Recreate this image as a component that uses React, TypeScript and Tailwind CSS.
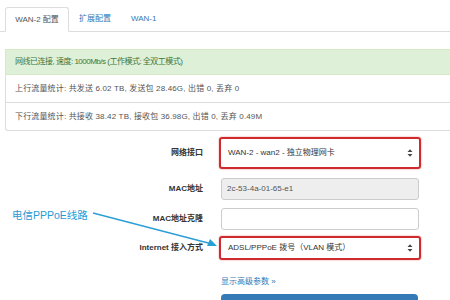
import React from "react";

const Arrows = () => (
  <svg width="6" height="9" viewBox="0 0 6 9" className="absolute right-[6px] top-1/2 -translate-y-1/2">
    <path d="M0.5 3.5 L3 0.8 L5.5 3.5 Z" fill="#444" />
    <path d="M0.5 5.5 L3 8.2 L5.5 5.5 Z" fill="#444" />
  </svg>
);

export default function App() {
  return (
    <div
      className="relative w-[450px] h-[300px] overflow-hidden bg-white text-[#333]"
      style={{ fontFamily: '"Liberation Sans", "Noto Sans CJK SC", sans-serif' }}
    >
      {/* Tabs */}
      <div className="flex pt-[7px] pl-[5px] border-b border-[#ddd] text-[8px]">
        <div className="-mb-px h-[25px] w-[64px] flex items-center justify-center border border-[#ddd] border-b-white rounded-t-[3px] bg-white text-[#555]">
          WAN-2 配置
        </div>
        <div className="h-[24px] flex items-center pl-[10px] pr-[20px] text-[#337ab7]">扩展配置</div>
        <div className="h-[24px] flex items-center text-[#337ab7]">WAN-1</div>
      </div>

      {/* Alert */}
      <div className="mt-[17px] ml-[5px] h-[26px] flex items-center pl-[9px] bg-[#dff0d8] border border-[#d6e9c6] border-r-0 text-[#3c763d] text-[8px] tracking-[-0.5px]">
        网线已连接, 速度: 1000Mb/s (工作模式: 全双工模式)
      </div>

      {/* List */}
      <div className="ml-[5px] border border-t-0 border-r-0 border-[#ddd] rounded-bl-[3px] text-[8px] text-[#555] tracking-[0.15px]">
        <div className="h-[28px] flex items-center pl-[9px] border-b border-[#ddd]">
          上行流量统计: 共发送 6.02 TB, 发送包 28.46G, 出错 0, 丢弃 0
        </div>
        <div className="h-[27px] flex items-center pl-[9px]">
          下行流量统计: 共接收 38.42 TB, 接收包 36.98G, 出错 0, 丢弃 0.49M
        </div>
      </div>

      {/* Form */}
      <div className="mt-[6px] text-[8px]">
        <div className="flex items-center h-[32px]">
          <div className="w-[203px] text-right font-bold">网络接口</div>
          <div className="relative ml-[16px] w-[202px] h-[32px] flex items-center pl-[7px] border-2 border-[#cf2b2f] rounded-[3px] shadow-[0_0_2px_#e88]">
            WAN-2 - wan2 - 独立物理网卡
            <Arrows />
          </div>
        </div>

        <div className="flex items-center h-[22px] mt-[9px]">
          <div className="w-[203px] text-right font-bold">MAC地址</div>
          <div className="ml-[18px] w-[198px] h-[22px] flex items-center pl-[5px] bg-[#eee] border border-[#ccc] rounded-[3px] text-[#555]">
            2c-53-4a-01-65-e1
          </div>
        </div>

        <div className="flex items-center h-[22px] mt-[8px]">
          <div className="w-[203px] text-right font-bold">MAC地址克隆</div>
          <div className="ml-[18px] w-[198px] h-[22px] bg-white border border-[#ccc] rounded-[3px]" />
        </div>

        <div className="flex items-center h-[24px] mt-[6px]">
          <div className="w-[203px] text-right font-bold">Internet 接入方式</div>
          <div className="relative ml-[16px] w-[202px] h-[24px] flex items-center pl-[7px] border-2 border-[#cf2b2f] rounded-[3px] shadow-[0_0_2px_#e88]">
            ADSL/PPPoE 拨号（VLAN 模式）
            <Arrows />
          </div>
        </div>

        <div className="ml-[221px] mt-[16px] text-[#337ab7]">显示高级参数 »</div>

        <div className="ml-[221px] mt-[6px] w-[197px] h-[20px] bg-[#337ab7] rounded-t-[4px]" />
      </div>

      {/* Annotation */}
      <div className="absolute left-[12px] top-[208px] text-[10.5px] text-[#1f9bd5]">电信PPPoE线路</div>
      <svg className="absolute left-0 top-0" width="450" height="300" viewBox="0 0 450 300">
        <line x1="93" y1="213" x2="212" y2="244" stroke="#2a9fd6" strokeWidth="1.4" />
        <path d="M217 246 L207 246 L210 239 Z" fill="#2a9fd6" />
      </svg>
    </div>
  );
}
